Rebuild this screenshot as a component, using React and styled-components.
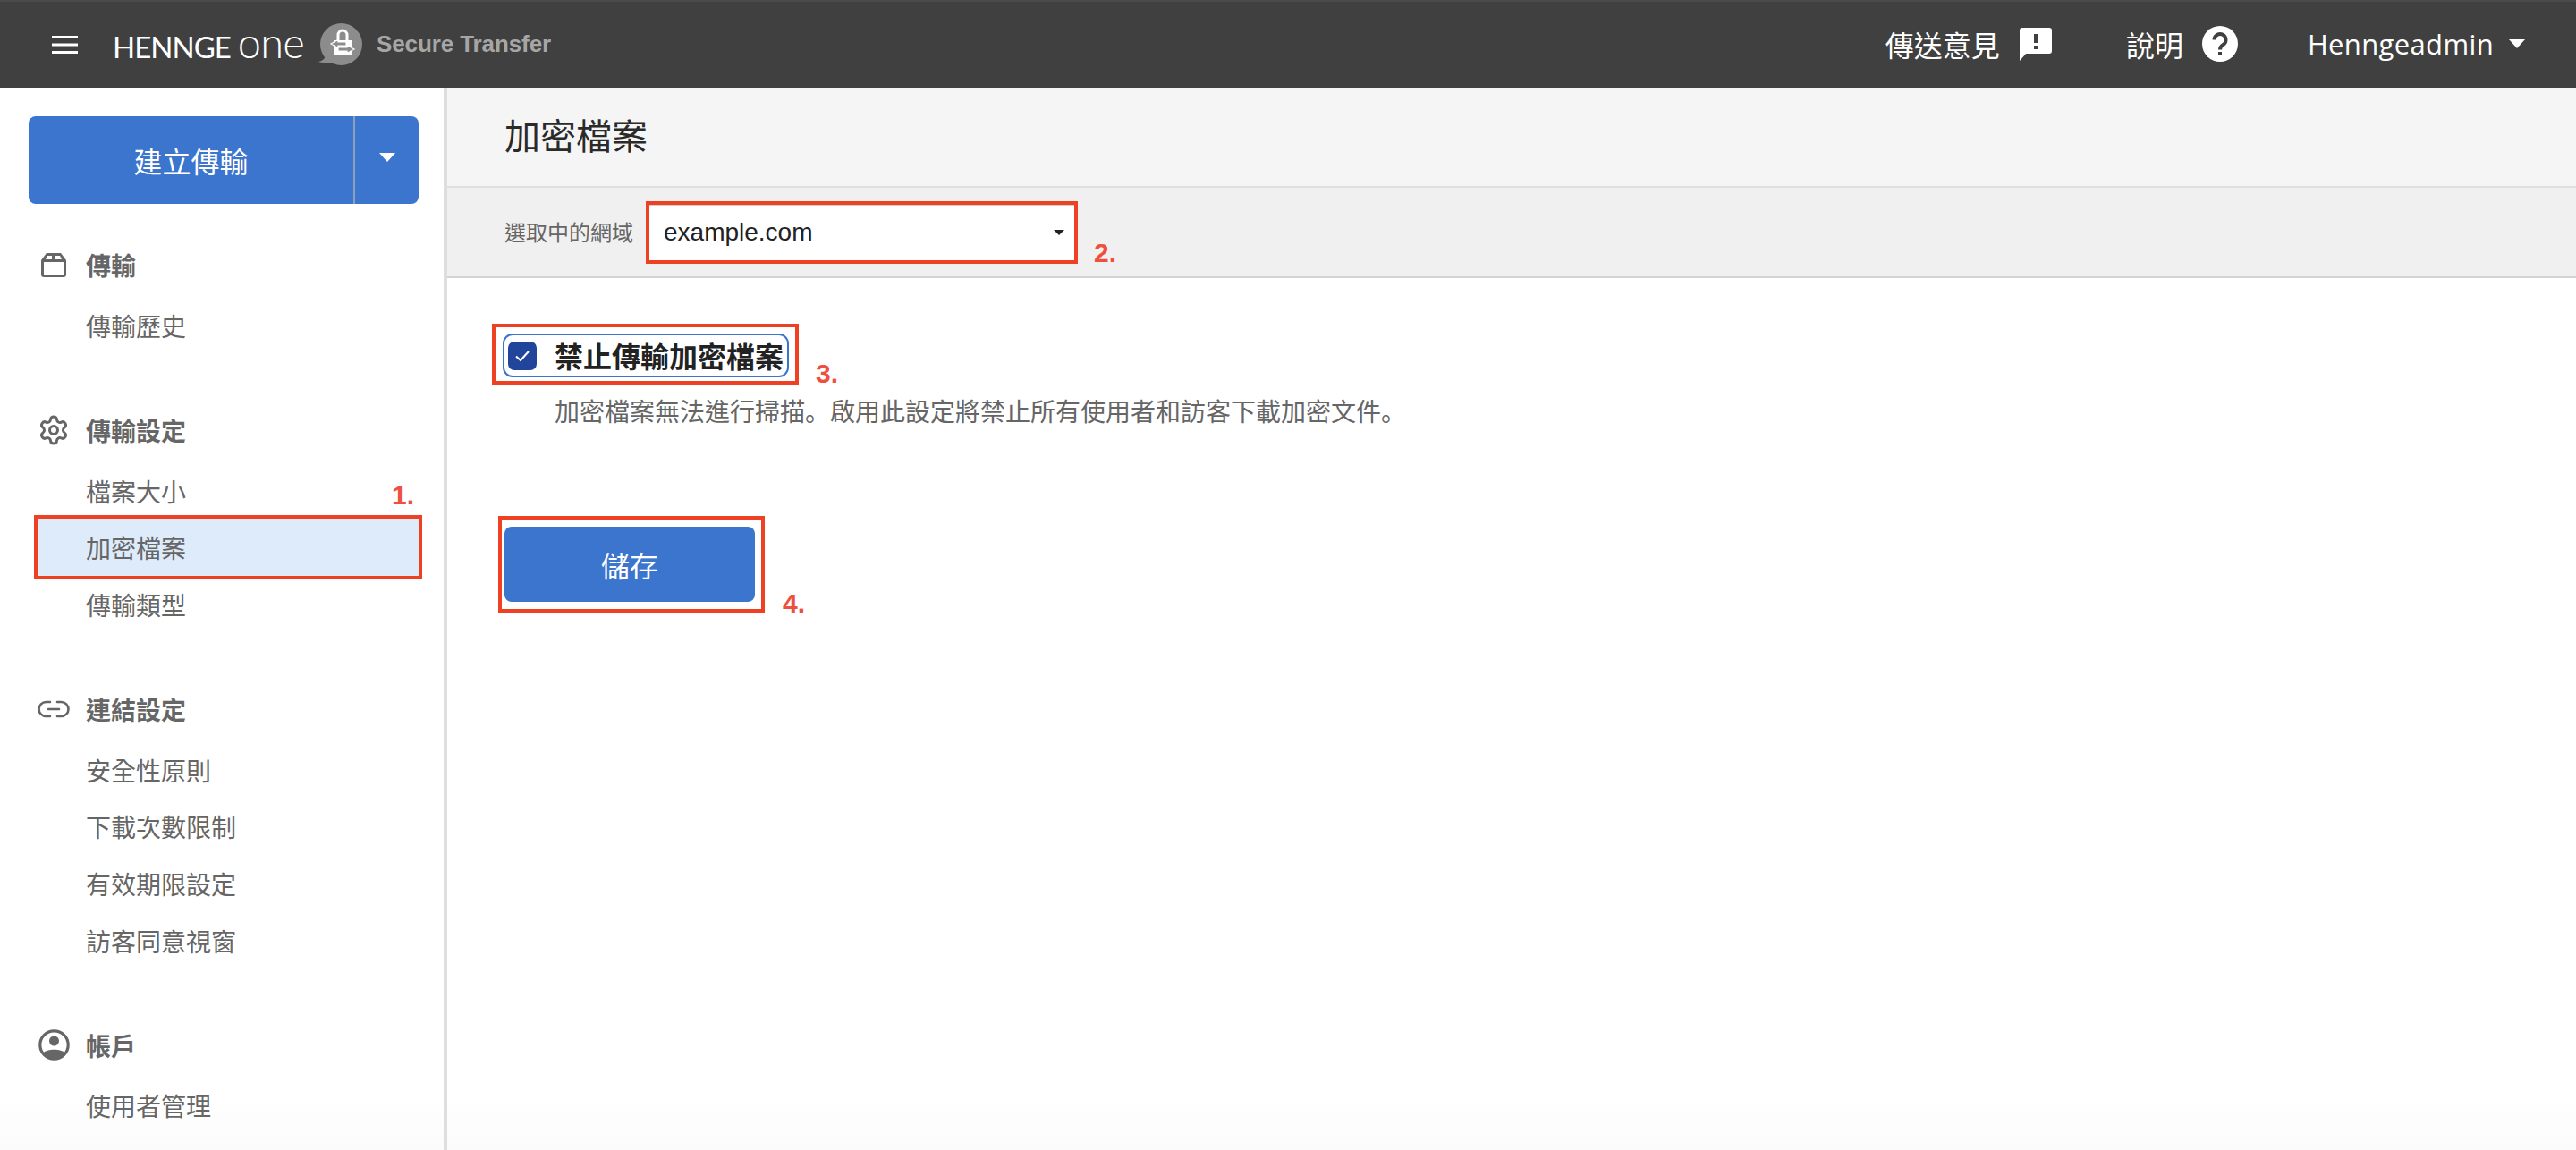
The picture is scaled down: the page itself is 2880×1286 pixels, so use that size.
import React from "react";
import styled, { createGlobalStyle } from "styled-components";
import { Settings } from "lucide-react";

const Global = createGlobalStyle`
  html, body { margin: 0; padding: 0; width: 2880px; height: 1286px; overflow: hidden; background: #fff; }
  body { font-family: "Liberation Sans", "Noto Sans CJK TC", sans-serif; }
  #root { width: 2880px; height: 1286px; }
  * { box-sizing: border-box; }
`;

const cjk = `"Noto Sans CJK TC", "Liberation Sans", sans-serif`;
const red = "#ee4023";
const blue = "#3b75ce";

const Page = styled.div`
  display: flex;
  flex-direction: column;
  width: 2880px;
  height: 1286px;
  overflow: hidden;
`;

const TopBar = styled.header`
  flex: 0 0 98px;
  display: flex;
  align-items: center;
  background: #404040;
  border-top: 2px solid #4a4a4a;
  padding: 0 57px 2px 58px;
  color: #fff;
`;

const MenuIcon = styled.svg`
  width: 29px;
  height: 20px;
  margin-right: 39px;
  margin-top: 2px;
`;

const LogoWord = styled.div`
  display: flex;
  align-items: baseline;
  font-family: "Lato", sans-serif;
  color: #fff;
  line-height: 1;
  margin-top: -4px;
`;

const LogoCaps = styled.span`
  font-size: 33px;
  font-weight: 400;
  letter-spacing: -1px;
`;

const LogoOne = styled.span`
  font-size: 47px;
  font-weight: 300;
  letter-spacing: -0.8px;
  margin-left: 8px;
`;

const ProductBadge = styled.svg`
  width: 52px;
  height: 50px;
  margin-left: 16px;
  margin-top: 2px;
`;

const ProductName = styled.span`
  font-size: 26px;
  font-weight: 700;
  color: #a6a6a6;
  margin-left: 13px;
  margin-top: 1px;
  letter-spacing: -0.1px;
`;

const TopSpacer = styled.div`
  flex: 1;
`;

const TopAction = styled.div`
  display: flex;
  align-items: center;
  font-family: ${cjk};
  font-size: 32px;
  line-height: 40px;
  margin-right: ${(p) => p.$gap}px;
`;

const TopIcon = styled.svg`
  margin-left: ${(p) => p.$ml}px;
  width: ${(p) => p.$w}px;
  height: ${(p) => p.$h}px;
`;

const UserName = styled.span`
  font-family: "Open Sans", sans-serif;
  font-size: 31px;
  letter-spacing: 0.35px;
  line-height: 40px;
`;

const Caret = styled.span`
  display: inline-block;
  width: 0;
  height: 0;
  border-left: ${(p) => p.$size}px solid transparent;
  border-right: ${(p) => p.$size}px solid transparent;
  border-top: ${(p) => p.$height}px solid ${(p) => p.$color || "#fff"};
  margin-left: ${(p) => p.$ml || 0}px;
`;

const Body = styled.div`
  flex: 1;
  display: flex;
  min-height: 0;
`;

const Sidebar = styled.aside`
  flex: 0 0 500px;
  border-right: 4px solid #dedede;
  padding-top: 32px;
  background: linear-gradient(to bottom, #fff calc(100% - 60px), #fbfbfb 100%);
  overflow: hidden;
`;

const SplitButton = styled.div`
  display: flex;
  width: 436px;
  height: 98px;
  margin-left: 32px;
  background: ${blue};
  border-radius: 8px;
  color: #fff;
  overflow: hidden;
`;

const SplitMain = styled.button`
  flex: 0 0 365px;
  border: 0;
  background: transparent;
  color: inherit;
  font-family: ${cjk};
  font-size: 32px;
  border-right: 2px solid #8d9fb9;
  padding: 0;
`;

const SplitCaret = styled.div`
  flex: 1;
  display: flex;
  align-items: center;
  justify-content: center;
  padding-bottom: 6px;
`;

const NavSection = styled.section`
  margin-top: ${(p) => p.$top}px;
`;

const NavHeading = styled.div`
  display: flex;
  align-items: center;
  height: 64px;
  margin-bottom: 4px;
  padding-left: 42px;
  color: #666;
  font-family: ${cjk};
  font-size: 28px;
  font-weight: 700;
`;

const HeadingText = styled.span`
  margin-left: -1px;
`;

const IconSlot = styled.span`
  flex: 0 0 36px;
  display: flex;
  align-items: center;
  justify-content: center;
  margin-right: 19px;
  color: #666;
`;

const NavItem = styled.div`
  position: relative;
  display: flex;
  align-items: center;
  width: 426px;
  height: 63.7px;
  margin-left: 42px;
  padding-left: 54px;
  color: #666;
  font-family: ${cjk};
  font-size: 28px;
  background: ${(p) => (p.$active ? "#deebfb" : "transparent")};
  outline: ${(p) => (p.$active ? `4px solid ${red}` : "none")};
  z-index: ${(p) => (p.$active ? 1 : 0)};
`;

const StepNumber = styled.span`
  font-family: "Liberation Sans", sans-serif;
  font-weight: 700;
  font-size: 30px;
  line-height: 30px;
  color: #ee4f3f;
  white-space: nowrap;
`;

const SideStep = styled(StepNumber)`
  position: absolute;
  left: 396px;
  top: -41px;
`;

const Main = styled.main`
  flex: 1;
  min-width: 0;
  display: flex;
  flex-direction: column;
`;

const TitleBar = styled.div`
  flex: 0 0 112px;
  display: flex;
  align-items: center;
  padding: 0 0 6px 64px;
  background: #f5f5f5;
  border-bottom: 2px solid #dfdfdf;
`;

const Title = styled.h1`
  margin: 0;
  font-family: ${cjk};
  font-size: 40px;
  font-weight: 400;
  color: #2a2a2a;
`;

const DomainBar = styled.div`
  flex: 0 0 101px;
  display: flex;
  align-items: center;
  padding-left: 64px;
  background: #f0f0f0;
  border-bottom: 2px solid #d4d4d4;
`;

const DomainLabel = styled.label`
  font-family: ${cjk};
  font-size: 24px;
  color: #666;
  margin-right: 18px;
  margin-top: -2px;
`;

const DomainSelect = styled.div`
  display: flex;
  align-items: center;
  justify-content: space-between;
  width: 475px;
  height: 62px;
  padding: 0 11px 0 16px;
  background: #fff;
  border-top: 1px solid #d0d0d0;
  outline: 4px solid ${red};
  font-size: 28px;
  color: #222;
`;

const DomainStep = styled(StepNumber)`
  margin-left: 22px;
  margin-top: 46px;
`;

const Content = styled.div`
  flex: 1;
  padding: 51px 0 0 50px;
  background: linear-gradient(to bottom, #fff calc(100% - 60px), #fbfbfb 100%);
`;

const Row = styled.div`
  display: flex;
  align-items: flex-end;
`;

const AnnotBox = styled.div`
  display: inline-flex;
  border: 4px solid ${red};
  padding: ${(p) => p.$pad};
`;

const CheckField = styled.label`
  display: flex;
  align-items: center;
  width: 320px;
  height: 49px;
  padding-left: 4px;
  border: 2px solid ${blue};
  border-radius: 11px;
`;

const CheckBox = styled.span`
  flex: 0 0 32px;
  height: 32px;
  display: flex;
  align-items: center;
  justify-content: center;
  background: #21459b;
  border-radius: 7px;
`;

const CheckLabel = styled.span`
  margin-left: 20px;
  font-family: ${cjk};
  font-size: 32px;
  font-weight: 700;
  color: #222;
  white-space: nowrap;
  line-height: 45px;
`;

const CheckStep = styled(StepNumber)`
  margin-left: 19px;
  margin-bottom: -3px;
`;

const Description = styled.p`
  margin: 9px 0 0 70px;
  font-family: ${cjk};
  font-size: 28px;
  line-height: 40px;
  color: #666;
`;

const Stop = styled.span`
  font-family: "Noto Sans CJK SC", sans-serif;
`;

const SaveRow = styled(Row)`
  margin: 98px 0 0 7px;
`;

const SaveButton = styled.button`
  width: 280px;
  height: 84px;
  border: 0;
  border-radius: 8px;
  background: ${blue};
  color: #fff;
  font-family: ${cjk};
  font-size: 32px;
  padding: 0;
`;

const SaveStep = styled(StepNumber)`
  margin-left: 20px;
  margin-bottom: -5px;
`;

const BoxIcon = () => (
  <svg width="28" height="27" viewBox="0 0 28 27">
    <path
      fill="currentColor"
      fillRule="evenodd"
      d="M6 0h16l6 8v16a3 3 0 0 1-3 3H3a3 3 0 0 1-3-3V8ZM3 10v14h22V10ZM7 3 5 7h7V3Zm9 0v4h7l-2-4Z"
    />
  </svg>
);

const LinkIcon = () => (
  <svg width="36" height="20" viewBox="0 0 36 20" fill="none" stroke="currentColor" strokeWidth="2.6" strokeLinecap="round">
    <path d="M14 2H9.500a8 8 0 0 0 0 16H14M22 2h4.500a8 8 0 0 1 0 16H22M12 10h12" />
  </svg>
);

const AccountIcon = () => (
  <svg width="35" height="35" viewBox="0 0 35 35">
    <circle cx="17.5" cy="17.5" r="15.7" fill="none" stroke="currentColor" strokeWidth="3.2" />
    <circle cx="17.5" cy="13" r="5.5" fill="currentColor" />
    <path d="M5.500 26.500C9 21.500 26 21.500 29.500 26.500A15 15 0 0 1 5.500 26.500Z" fill="currentColor" />
  </svg>
);

const sections = [
  { top: 36, title: "傳輸", icon: <BoxIcon />, items: ["傳輸歷史"] },
  { top: 53, title: "傳輸設定", icon: <Settings size={36} strokeWidth={2} />, items: ["檔案大小", "加密檔案", "傳輸類型"] },
  { top: 53, title: "連結設定", icon: <LinkIcon />, items: ["安全性原則", "下載次數限制", "有效期限設定", "訪客同意視窗"] },
  { top: 53, title: "帳戶", icon: <AccountIcon />, items: ["使用者管理"] },
];

export default function App() {
  return (
    <Page>
      <Global />
      <TopBar>
        <MenuIcon viewBox="0 0 29 20" fill="#fff">
          <rect width="29" height="3" />
          <rect y="8.5" width="29" height="3" />
          <rect y="17" width="29" height="3" />
        </MenuIcon>
        <LogoWord>
          <LogoCaps>HENNGE</LogoCaps>
          <LogoOne>one</LogoOne>
        </LogoWord>
        <ProductBadge viewBox="0 0 52 50">
          <circle cx="25.5" cy="24.5" r="23.5" fill="#8c8c8c" />
          <path d="M8 36c0 4-3 7-8 8 6 2 13 2 19 1Z" fill="#8c8c8c" />
          <path d="M22 21v-7a5 5 0 0 1 10 0v7" fill="none" stroke="#fff" strokeWidth="3" />
          <path d="M17 20h20v17H17Z" fill="#fff" />
          <path d="M14 24l8-4.500V22h9v4h-9v2.500Z" fill="#8c8c8c" stroke="#fff" strokeWidth="1.200" />
          <path d="M40 30l-8-4.500V28h-10v4h10v2.500Z" fill="#8c8c8c" stroke="#fff" strokeWidth="1.200" />
        </ProductBadge>
        <ProductName>Secure Transfer</ProductName>
        <TopSpacer />
        <TopAction $gap={83}>
          傳送意見
          <TopIcon $ml={22} $w={36} $h={37} viewBox="0 0 36 37">
            <path
              fill="#fff"
              fillRule="evenodd"
              d="M3 0h30a3 3 0 0 1 3 3v23a3 3 0 0 1-3 3H7l-7 8V3a3 3 0 0 1 3-3ZM16 7v10h4V7Zm0 13v4h4v-4Z"
            />
          </TopIcon>
        </TopAction>
        <TopAction $gap={78}>
          說明
          <TopIcon $ml={21} $w={40} $h={40} viewBox="0 0 40 40">
            <circle cx="20" cy="20" r="20" fill="#fff" />
            <path d="M13.500 15.500a6.500 6.500 0 1 1 10 5.500c-2.500 1.600-3.500 2.600-3.500 5.500" fill="none" stroke="#404040" strokeWidth="4" />
            <rect x="18" y="29" width="4" height="4" fill="#404040" />
          </TopIcon>
        </TopAction>
        <UserName>Henngeadmin</UserName>
        <Caret $size={9} $height={10} $ml={17} />
      </TopBar>
      <Body>
        <Sidebar>
          <SplitButton>
            <SplitMain>建立傳輸</SplitMain>
            <SplitCaret>
              <Caret $size={9} $height={10} />
            </SplitCaret>
          </SplitButton>
          {sections.map((section) => (
            <NavSection key={section.title} $top={section.top}>
              <NavHeading>
                <IconSlot>{section.icon}</IconSlot>
                <HeadingText>{section.title}</HeadingText>
              </NavHeading>
              {section.items.map((item) => (
                <NavItem key={item} $active={item === "加密檔案"}>
                  {item}
                  {item === "加密檔案" && <SideStep>1.</SideStep>}
                </NavItem>
              ))}
            </NavSection>
          ))}
        </Sidebar>
        <Main>
          <TitleBar>
            <Title>加密檔案</Title>
          </TitleBar>
          <DomainBar>
            <DomainLabel>選取中的網域</DomainLabel>
            <DomainSelect>
              example.com
              <Caret $size={6} $height={6} $color="#222" />
            </DomainSelect>
            <DomainStep>2.</DomainStep>
          </DomainBar>
          <Content>
            <Row>
              <AnnotBox $pad="7px 7px 4px 8px">
                <CheckField>
                  <CheckBox>
                    <svg width="18" height="14" viewBox="0 0 18 14" fill="none" stroke="#fff" strokeWidth="2">
                      <path d="M2 7.500l5 4.500L16 2" />
                    </svg>
                  </CheckBox>
                  <CheckLabel>禁止傳輸加密檔案</CheckLabel>
                </CheckField>
              </AnnotBox>
              <CheckStep>3.</CheckStep>
            </Row>
            <Description>
              加密檔案無法進行掃描<Stop>。</Stop>啟用此設定將禁止所有使用者和訪客下載加密文件<Stop>。</Stop>
            </Description>
            <SaveRow>
              <AnnotBox $pad="8px 7px 8px 3px">
                <SaveButton>儲存</SaveButton>
              </AnnotBox>
              <SaveStep>4.</SaveStep>
            </SaveRow>
          </Content>
        </Main>
      </Body>
    </Page>
  );
}
